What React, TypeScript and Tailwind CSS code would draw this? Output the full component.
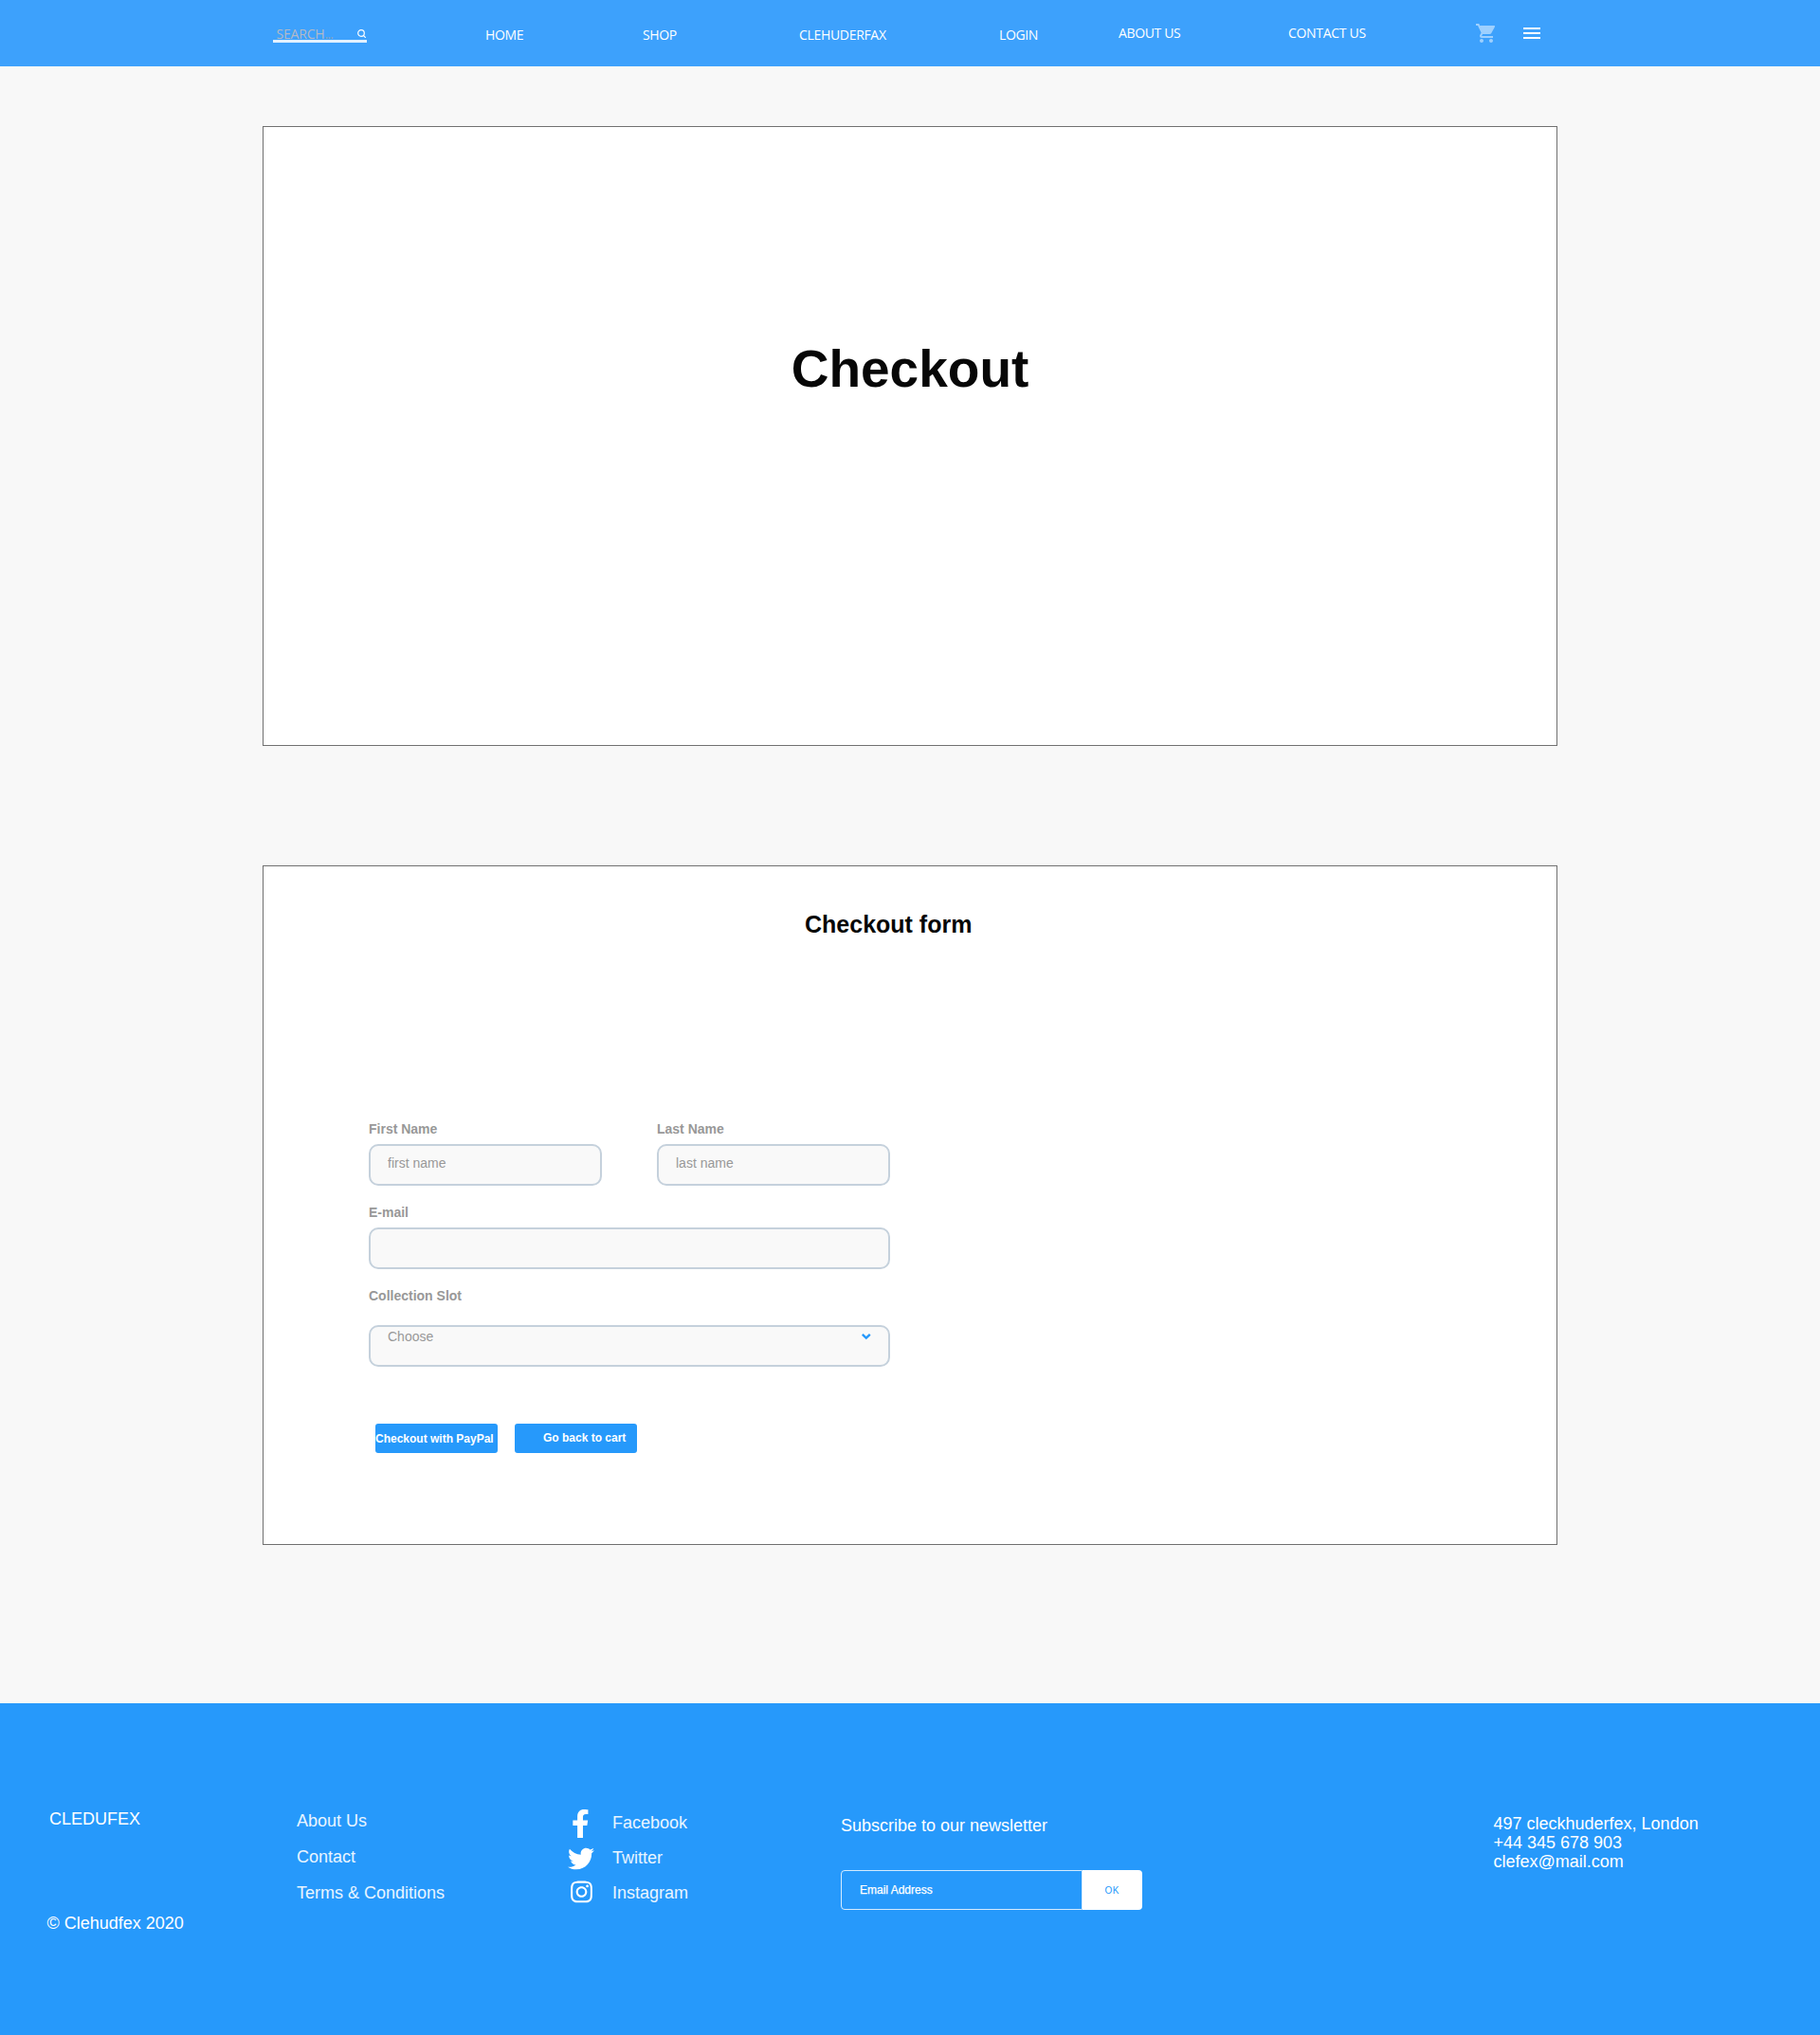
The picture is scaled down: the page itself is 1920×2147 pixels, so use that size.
import type { ReactNode } from "react";
import { FaFacebookF, FaInstagram, FaTwitter } from "react-icons/fa";
import { MdMenu, MdShoppingCart } from "react-icons/md";

const navLinks = [
  { label: "HOME", className: "w-[166px] pt-[27px] tracking-[-0.35px]" },
  { label: "SHOP", className: "w-[165px] pt-[27px] tracking-[-0.35px]" },
  { label: "CLEHUDERFAX", className: "w-[211px] pt-[27px] tracking-[-0.32px]" },
  { label: "LOGIN", className: "w-[126px] pt-[27px] tracking-[-0.4px]" },
  { label: "ABOUT US", className: "w-[179px] pt-[25px] tracking-[-0.35px]" },
  { label: "CONTACT US", className: "w-[197px] pt-[25px] tracking-[-0.3px]" },
];

function Header() {
  return (
    <header className="flex h-[70px] items-start bg-[#3da1fc] pl-[287.5px] font-['Open_Sans',sans-serif] text-sm leading-5 text-white">
      <div className="mt-[26px] flex h-[19px] w-[99px] items-start justify-between border-b-[3px] border-white/85 pl-[4px] pr-px">
        <span className="tracking-[-0.2px] text-[#b3b9c6]">
          SEARCH<span className="tracking-[-0.7px] text-[#8fa5bb]">...</span>
        </span>
        <svg className="mt-[5px] h-[9px] w-[9px]" viewBox="0 0 9 9" fill="none" stroke="white" strokeWidth="1.2">
          <circle cx="4" cy="4" r="3.3" />
          <path d="M6.4 6.4 8.8 8.8" />
        </svg>
      </div>
      <nav className="ml-[125.5px] flex whitespace-nowrap">
        {navLinks.map((l) => (
          <a key={l.label} className={l.className}>
            {l.label}
          </a>
        ))}
      </nav>
      <MdShoppingCart className="mt-[23px] h-6 w-6 text-white/50" />
      <MdMenu className="ml-6 mt-[23px] h-6 w-6" />
    </header>
  );
}

function Field({ label, children, className = "" }: { label: string; children?: ReactNode; className?: string }) {
  return (
    <label className={`flex flex-col text-sm leading-4 text-[#989898] ${className}`}>
      <span className="font-bold">{label}</span>
      {children}
    </label>
  );
}

const box = "h-[43.5px] rounded-[10px] border-2 border-[#c5d1dc] bg-[#f9f9f9] pl-[18px]";

function CheckoutForm() {
  return (
    <section className="mt-[126px] h-[717px] w-[1366px] border border-[#707070] bg-white">
      <h2 className="ml-[571px] mt-[46px] text-[25px] font-bold leading-[30px] text-[#070707]">Checkout form</h2>
      <form className="ml-[111px] mt-[193px] w-[550px]">
        <div className="flex justify-between">
          <Field label="First Name" className="w-[246px]">
            <div className={`mt-[8px] pt-[10px] ${box}`}>first name</div>
          </Field>
          <Field label="Last Name" className="w-[246px]">
            <div className={`mt-[8px] pt-[10px] ${box}`}>last name</div>
          </Field>
        </div>
        <Field label="E-mail" className="mt-[20.5px]">
          <div className={`mt-[8px] ${box}`} />
        </Field>
        <Field label="Collection Slot" className="mt-[20.5px]">
          <div className={`mt-[23px] flex items-start justify-between pr-[18px] pt-[2px] ${box}`}>
            Choose
            <svg className="mt-[5px] h-[7px] w-[10px]" viewBox="0 0 10 7" fill="none" stroke="#2699fb" strokeWidth="2.3">
              <path d="M0.8 0.8 4.8 4.6 8.8 0.8" />
            </svg>
          </div>
        </Field>
      </form>
      <div className="ml-[118px] mt-[60px] flex gap-[18px] text-xs font-bold leading-[14px] text-white">
        <button className="h-[31px] w-[129px] whitespace-nowrap rounded-[3px] bg-[#2699fb] pt-px text-left">
          Checkout with PayPal
        </button>
        <button className="h-[31px] w-[129px] whitespace-nowrap rounded-[3px] bg-[#2699fb] pb-px pl-[30px] text-left">
          Go back to cart
        </button>
      </div>
    </section>
  );
}

function Footer() {
  return (
    <footer className="mt-[167px] flex h-[350px] items-start whitespace-nowrap bg-[#2699fb] text-lg leading-5 text-white">
      <div className="flex w-[263px] flex-col gap-[90px] pl-[49.5px] pt-[112px]">
        <span className="pl-[2.5px]">CLEDUFEX</span>
        <span>© Clehudfex 2020</span>
      </div>
      <div className="ml-[50px] flex w-[286px] flex-col gap-[18px] pt-[114px] text-white/90">
        <a>About Us</a>
        <a>Contact</a>
        <a>Terms &amp; Conditions</a>
      </div>
      <div className="flex w-[47px] flex-col pt-[112px]">
        <FaFacebookF className="ml-[4px] h-[30px] w-[18.75px]" />
        <FaTwitter className="ml-[0.3px] mt-[8px] h-7 w-7" />
        <FaInstagram className="ml-[3px] mt-[8px] h-[26px] w-[23px]" />
      </div>
      <div className="flex w-[241px] flex-col gap-[17px] pt-[116px] text-white/90">
        <a>Facebook</a>
        <a>Twitter</a>
        <a>Instagram</a>
      </div>
      <div className="w-[688.5px] pt-[119px]">
        <p>Subscribe to our newsletter</p>
        <div className="mt-[37px] flex h-[42px]">
          <div className="w-[254.5px] rounded-l-[4px] border border-white/80 pl-[19px] pt-[13px] text-xs leading-[14px] [-webkit-text-stroke:0.25px_white]">
            Email Address
          </div>
          <button className="w-[63.5px] rounded-r-[4px] bg-white pl-[24px] pt-px text-left text-[10px] leading-3 tracking-[0.4px] text-[#2699fb]">
            OK
          </button>
        </div>
      </div>
      <address className="pt-[117px] not-italic">
        497 cleckhuderfex, London
        <br />
        +44 345 678 903
        <br />
        clefex@mail.com
      </address>
    </footer>
  );
}

export default function App() {
  return (
    <div className="h-[2147px] w-[1920px] overflow-hidden bg-[#f8f8f8] font-['Liberation_Sans',Arial,sans-serif]">
      <Header />
      <main className="flex flex-col items-center pt-[63px]">
        <section className="h-[654px] w-[1366px] border border-[#707070] bg-white pt-[224px] text-center">
          <h1 className="text-[55px] font-bold leading-[62px] text-[#070707]">Checkout</h1>
        </section>
        <CheckoutForm />
      </main>
      <Footer />
    </div>
  );
}
